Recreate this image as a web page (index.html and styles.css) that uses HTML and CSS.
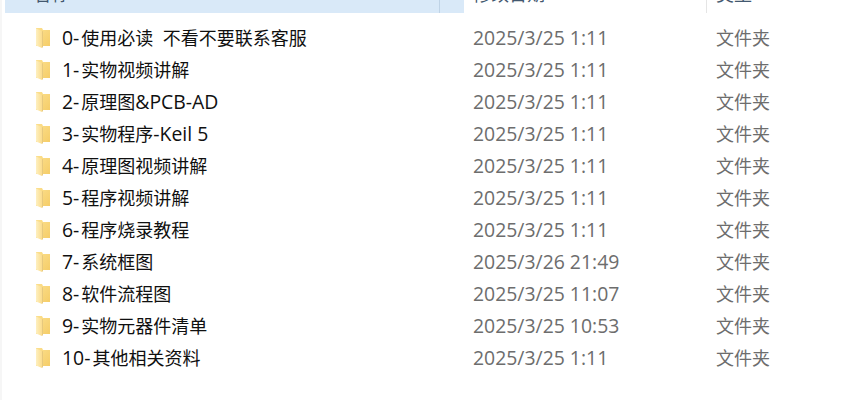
FILE: index.html
```html
<!DOCTYPE html>
<html lang="zh-CN">
<head>
    <meta charset="UTF-8">
    <title>文件列表</title>
    <link rel="stylesheet" href="styles.css">
</head>
<body>
    <svg width="0" height="0" class="defs">
        <defs>
            <linearGradient id="folderBack" x1="0" y1="0" x2="1" y2="1">
                <stop offset="0" stop-color="#fce08f"/>
                <stop offset="1" stop-color="#f5cd68"/>
            </linearGradient>
            <linearGradient id="folderFlap" x1="0" y1="0" x2="1" y2="0">
                <stop offset="0" stop-color="#fef0c0"/>
                <stop offset="1" stop-color="#fbdc8c"/>
            </linearGradient>
            <symbol id="folder" viewBox="0 0 14 20">
                <path d="M0 0h6l1 2h7v16H0z" fill="url(#folderBack)"/>
                <path d="M0 0.500l6 2.500V20L0 17.500z" fill="url(#folderFlap)"/>
                <path d="M6 3V20L7 19V3.500z" fill="#e6c87e"/>
            </symbol>
        </defs>
    </svg>
    <div class="explorer">
        <div class="header">
            <div class="head-cell name"><span>名称</span></div>
            <div class="head-cell date"><span>修改日期</span></div>
            <div class="head-cell type"><span>类型</span></div>
        </div>
        <div class="rows">
            <div class="row"><svg class="icon"><use href="#folder"/></svg><span class="file"><span class="latin">0-</span>使用必读&nbsp;&nbsp;不看不要联系客服</span><span class="modified">2025/3/25 1:11</span><span class="kind">文件夹</span></div>
            <div class="row"><svg class="icon"><use href="#folder"/></svg><span class="file"><span class="latin">1-</span>实物视频讲解</span><span class="modified">2025/3/25 1:11</span><span class="kind">文件夹</span></div>
            <div class="row"><svg class="icon"><use href="#folder"/></svg><span class="file"><span class="latin">2-</span>原理图<span class="latin">&amp;PCB-AD</span></span><span class="modified">2025/3/25 1:11</span><span class="kind">文件夹</span></div>
            <div class="row"><svg class="icon"><use href="#folder"/></svg><span class="file"><span class="latin">3-</span>实物程序<span class="latin">-Keil 5</span></span><span class="modified">2025/3/25 1:11</span><span class="kind">文件夹</span></div>
            <div class="row"><svg class="icon"><use href="#folder"/></svg><span class="file"><span class="latin">4-</span>原理图视频讲解</span><span class="modified">2025/3/25 1:11</span><span class="kind">文件夹</span></div>
            <div class="row"><svg class="icon"><use href="#folder"/></svg><span class="file"><span class="latin">5-</span>程序视频讲解</span><span class="modified">2025/3/25 1:11</span><span class="kind">文件夹</span></div>
            <div class="row"><svg class="icon"><use href="#folder"/></svg><span class="file"><span class="latin">6-</span>程序烧录教程</span><span class="modified">2025/3/25 1:11</span><span class="kind">文件夹</span></div>
            <div class="row"><svg class="icon"><use href="#folder"/></svg><span class="file"><span class="latin">7-</span>系统框图</span><span class="modified">2025/3/26 21:49</span><span class="kind">文件夹</span></div>
            <div class="row"><svg class="icon"><use href="#folder"/></svg><span class="file"><span class="latin">8-</span>软件流程图</span><span class="modified">2025/3/25 11:07</span><span class="kind">文件夹</span></div>
            <div class="row"><svg class="icon"><use href="#folder"/></svg><span class="file"><span class="latin">9-</span>实物元器件清单</span><span class="modified">2025/3/25 10:53</span><span class="kind">文件夹</span></div>
            <div class="row"><svg class="icon"><use href="#folder"/></svg><span class="file"><span class="latin">10-</span>其他相关资料</span><span class="modified">2025/3/25 1:11</span><span class="kind">文件夹</span></div>
        </div>
    </div>
</body>
</html>
```
FILE: styles.css
```css
html, body {
    height: 100%;
}

body {
    margin: 0;
    background: #ffffff;
    overflow: hidden;
    font-family: "Open Sans", "Noto Sans CJK SC", sans-serif;
    font-size: 18px;
}

.defs {
    display: block;
}

.explorer {
    box-sizing: border-box;
    height: 100%;
    padding-left: 3px;
    border-left: 2px solid #f6f6f6;
}

.header {
    display: flex;
    height: 13px;
    color: #43586f;
}

.head-cell {
    height: 13px;
    overflow: hidden;
    box-sizing: border-box;
    flex: none;
}

.head-cell span {
    display: block;
    margin-top: -6px;
    line-height: 0;
}

.head-cell.name {
    width: 435px;
    padding-left: 28px;
    background: #d9e9f8;
    border-right: 1px solid #bfd3e6;
}

.head-cell.date {
    width: 267px;
    padding-left: 33px;
    background: linear-gradient(to right, #d9e9f8 24px, #ffffff 24px);
    border-right: 1px solid #e5e5e5;
}

.head-cell.type {
    padding-left: 9px;
}

.rows {
    padding-top: 9px;
}

.row {
    display: flex;
    align-items: center;
    height: 32px;
    line-height: 32px;
    white-space: nowrap;
}

.icon {
    width: 14px;
    height: 20px;
    margin-left: 31px;
    flex: none;
}

.file {
    width: 411px;
    margin-left: 12px;
    color: #101010;
    flex: none;
}

/* latin glyphs in the screenshot run larger than the cjk ones */
.latin {
    font-size: 19.4px;
}

.latin:first-child {
    padding-right: 2px;
}

.modified {
    width: 243px;
    color: #6d6d6d;
    font-size: 19.4px;
    flex: none;
}

.kind {
    color: #6d6d6d;
}
```
